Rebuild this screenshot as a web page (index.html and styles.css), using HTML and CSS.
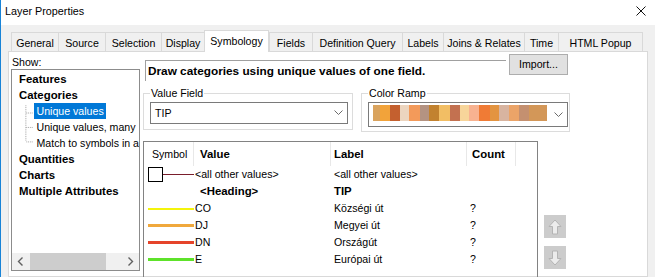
FILE: index.html
```html
<!DOCTYPE html>
<html lang="hu">
<head>
    <meta charset="UTF-8">
    <title>Layer Properties</title>
<link rel="stylesheet" href="styles.css">
</head>
<body>
<div class="window">
    <div class="titlebar">
        <span class="title">Layer Properties</span>
        <svg class="close" width="10" height="10" viewBox="0 0 10 10"><path d="M0.5 0.5L9.5 9.5M9.5 0.5L0.5 9.5" stroke="#111" stroke-width="1"/></svg>
    </div>

    <!-- Tab strip -->
    <div class="tabs">
        <div class="tab">General</div>
        <div class="tab">Source</div>
        <div class="tab">Selection</div>
        <div class="tab">Display</div>
        <div class="tab active">Symbology</div>
        <div class="tab">Fields</div>
        <div class="tab">Definition Query</div>
        <div class="tab">Labels</div>
        <div class="tab">Joins &amp; Relates</div>
        <div class="tab">Time</div>
        <div class="tab last">HTML Popup</div>
    </div>

    <div class="page">
        <div class="show-col">
            <div class="show-label">Show:</div>
            <div class="tree">
                <div class="tree-items">
                    <div class="node">Features</div>
                    <div class="node">Categories</div>
                    <div class="children">
                        <svg class="branches" width="15" height="48" viewBox="0 0 15 48">
                            <path d="M6.5 0V40M7 8.5H15M7 24.5H15M7 40.5H15" stroke="#9a9a9a" stroke-width="1" stroke-dasharray="1 1" fill="none"/>
                        </svg>
                        <div class="leaves">
                            <div class="leaf"><span class="selected">Unique values</span></div>
                            <div class="leaf">Unique values, many</div>
                            <div class="leaf">Match to symbols in a</div>
                        </div>
                    </div>
                    <div class="node">Quantities</div>
                    <div class="node">Charts</div>
                    <div class="node">Multiple Attributes</div>
                </div>
                <div class="hscroll">
                    <div class="sb-arrow"><svg width="7" height="9" viewBox="0 0 7 9"><path d="M5.5 0.5L1.5 4.5L5.5 8.5" stroke="#606060" stroke-width="1.4" fill="none"/></svg></div>
                    <div class="sb-thumb"></div>
                    <div class="sb-space"></div>
                    <div class="sb-arrow"><svg width="7" height="9" viewBox="0 0 7 9"><path d="M1.5 0.5L5.5 4.5L1.5 8.5" stroke="#606060" stroke-width="1.4" fill="none"/></svg></div>
                </div>
            </div>
        </div>

        <div class="main-col">
            <div class="desc-row">
                <div class="desc">Draw categories using unique values of one field.</div>
                <div class="btn">Import...</div>
            </div>

            <div class="fields-row">
                <fieldset class="group value-field">
                    <legend>Value Field</legend>
                    <div class="combo value-combo">
                        <span>TIP</span>
                        <svg class="chev" width="9" height="6" viewBox="0 0 9 6"><path d="M0.5 0.5L4.5 4.5L8.5 0.5" stroke="#6a6a6a" stroke-width="1" fill="none"/></svg>
                    </div>
                </fieldset>
                <fieldset class="group color-ramp">
                    <legend>Color Ramp</legend>
                    <div class="combo ramp-combo">
                        <div class="ramp"></div>
                        <svg class="chev" width="9" height="6" viewBox="0 0 9 6"><path d="M0.5 0.5L4.5 4.5L8.5 0.5" stroke="#6a6a6a" stroke-width="1" fill="none"/></svg>
                    </div>
                </fieldset>
            </div>

            <div class="table-row">
                <div class="symtable">
                    <div class="row head">
                        <div class="th c-sym">Symbol</div>
                        <div class="th c-val b">Value</div>
                        <div class="th c-lab b">Label</div>
                        <div class="th c-cnt b">Count</div>
                    </div>
                    <div class="row">
                        <div class="c-sym"><span class="swatch"></span><span class="line other"></span></div>
                        <div class="c-val">&lt;all other values&gt;</div>
                        <div class="c-lab">&lt;all other values&gt;</div>
                        <div class="c-cnt"></div>
                    </div>
                    <div class="row">
                        <div class="c-sym"></div>
                        <div class="c-val heading b">&lt;Heading&gt;</div>
                        <div class="c-lab b">TIP</div>
                        <div class="c-cnt"></div>
                    </div>
                    <div class="row">
                        <div class="c-sym"><span class="line co"></span></div>
                        <div class="c-val">CO</div>
                        <div class="c-lab">Községi út</div>
                        <div class="c-cnt">?</div>
                    </div>
                    <div class="row">
                        <div class="c-sym"><span class="line dj"></span></div>
                        <div class="c-val">DJ</div>
                        <div class="c-lab">Megyei út</div>
                        <div class="c-cnt">?</div>
                    </div>
                    <div class="row">
                        <div class="c-sym"><span class="line dn"></span></div>
                        <div class="c-val">DN</div>
                        <div class="c-lab">Országút</div>
                        <div class="c-cnt">?</div>
                    </div>
                    <div class="row">
                        <div class="c-sym"><span class="line e"></span></div>
                        <div class="c-val">E</div>
                        <div class="c-lab">Európai út</div>
                        <div class="c-cnt">?</div>
                    </div>
                </div>
                <div class="order-btns">
                    <div class="move-btn">
                        <svg width="14" height="16" viewBox="0 0 14 16"><path d="M7 1L13 7.5H9.5V15H4.5V7.5H1Z" fill="#ececec" stroke="#b4b4b4" stroke-width="1"/></svg>
                    </div>
                    <div class="move-btn">
                        <svg width="14" height="16" viewBox="0 0 14 16"><path d="M7 15L13 8.5H9.5V1H4.5V8.5H1Z" fill="#ececec" stroke="#b4b4b4" stroke-width="1"/></svg>
                    </div>
                </div>
            </div>
        </div>
    </div>
</div>
</body>
</html>
```

FILE: styles.css
```css
* {
    box-sizing: border-box;
}
body {
    margin: 0;
    background: #f0f0f0;
    font-family: "Liberation Sans", Arial, sans-serif;
    font-size: 10.6px;
    color: #000;
}
.b {
    font-weight: bold;
    font-size: 11.4px;
}
.window {
    width: 655px;
    height: 277px;
    border-left: 1px solid #1883d7;
    overflow: hidden;
}
.titlebar {
    height: 25px;
    background: #fff;
    display: flex;
    align-items: center;
    justify-content: space-between;
    padding: 0 9px 3px 4px;
}
.title {
    font-size: 10.8px;
}

/* Tabs */
.tabs {
    margin-top: 5px;
    padding-left: 10px;
    height: 21px;
    display: grid;
    grid-template-columns: 47px 47px 56px 43px 65px 43px 90px 41px 81px 34px 85px;
    align-items: end;
}
.tab {
    height: 19px;
    padding-top: 2px;
    line-height: 17px;
    text-align: center;
    border-top: 1px solid #d9d9d9;
    border-left: 1px solid #d9d9d9;
    white-space: nowrap;
}
.tab.last {
    border-right: 1px solid #d9d9d9;
}
.tab.active {
    height: 22px;
    margin-bottom: -1px;
    background: #fff;
    border-right: 1px solid #d9d9d9;
}
.page {
    margin-left: 7px;
    width: 640px;
    height: 226px;
    background: #fff;
    border: 1px solid #d9d9d9;
    padding-left: 2px;
    display: flex;
}

/* Left tree */
.show-col {
    width: 129px;
}
.show-label {
    margin-top: 3px;
    height: 14px;
    line-height: 14px;
    padding-left: 1px;
}
.tree {
    height: 202px;
    border: 1px solid #8c8c8c;
    display: flex;
    flex-direction: column;
}
.tree-items {
    flex: 1;
    padding-top: 1px;
}
.node {
    height: 16px;
    line-height: 16px;
    padding-left: 7px;
    font-weight: bold;
    font-size: 11.4px;
    white-space: nowrap;
}
.children {
    display: flex;
    margin-left: 8px;
}
.branches {
    display: block;
}
.leaf {
    height: 16px;
    line-height: 16px;
    padding-left: 3px;
    white-space: nowrap;
    overflow: hidden;
}
.selected {
    display: inline-block;
    margin-left: -3px;
    padding: 0 2px 0 3px;
    background: #0078d7;
    color: #fff;
}
.hscroll {
    height: 17px;
    background: #f0f0f0;
    display: flex;
}
.sb-arrow {
    width: 17px;
    display: flex;
    align-items: center;
    justify-content: center;
}
.sb-thumb {
    width: 76px;
    margin-left: 1px;
    background: #cdcdcd;
}
.sb-space {
    flex: 1;
}

/* Main column */
.main-col {
    margin-left: 3px;
    width: 430px;
}
.desc-row {
    height: 31px;
    display: flex;
    align-items: flex-start;
}
.desc {
    margin: 8px 0 0 2px;
    width: 361px;
    height: 21px;
    line-height: 21px;
    padding-left: 2px;
    border-top: 1px solid #a0a0a0;
    border-left: 1px solid #a0a0a0;
    font-weight: bold;
    font-size: 11.8px;
    white-space: nowrap;
}
.btn {
    margin: 2px 0 0 3px;
    width: 59px;
    height: 21px;
    line-height: 19px;
    text-align: center;
    background: #e1e1e1;
    border: 1px solid #adadad;
}
.fields-row {
    margin-top: 4px;
    height: 45px;
    display: flex;
    align-items: flex-start;
}
.group {
    margin: 0;
    min-width: 0;
    border: 1px solid #dcdcdc;
}
.group legend {
    padding: 0 1px;
    line-height: 13px;
}
.value-field {
    width: 210px;
    padding: 2px 4px 5px 6px;
}
.color-ramp {
    width: 209px;
    margin-left: 8px;
    padding: 2px 1px 4px 6px;
}
.combo {
    border: 1px solid #7a7a7a;
    display: flex;
    align-items: center;
    justify-content: space-between;
}
.value-combo {
    width: 198px;
    height: 22px;
    padding-left: 4px;
}
.ramp-combo {
    width: 200px;
    height: 25px;
    align-items: flex-start;
}
.chev {
    margin-right: 4px;
}
.ramp-combo .chev {
    margin-top: 9px;
}
.ramp {
    margin: 2px 0 0 4px;
    width: 174px;
    height: 16px;
    background: linear-gradient(to right,
        #d9a35e 0 7px, #f2a33a 7px 17px, #c4602f 17px 27px, #ecd5bf 27px 36px,
        #f39a5a 36px 47px, #b49382 47px 56px, #c2822f 56px 66px, #f2be64 66px 77px,
        #c37150 77px 87px, #f7d59a 87px 96px, #f8b290 96px 106px, #f07b35 106px 117px,
        #e39440 117px 126px, #d8b4a0 126px 136px, #eba468 136px 146px, #c49070 146px 156px,
        #d39758 156px 174px);
}

/* Symbol table */
.table-row {
    margin-top: 9px;
    display: flex;
}
.symtable {
    width: 395px;
    height: 160px;
    border: 1px solid #828282;
}
.row {
    display: grid;
    grid-template-columns: 50px 137px 136px 49px;
    height: 17px;
    line-height: 17px;
    white-space: nowrap;
}
.row.head {
    height: 24px;
    line-height: 24px;
}
.th {
    border-right: 1px solid #e8e8e8;
}
.c-sym {
    display: flex;
    align-items: center;
}
.th.c-sym {
    display: block;
    padding-left: 8px;
}
.c-val {
    padding-left: 1px;
}
.th.c-val, .c-val.heading {
    padding-left: 6px;
}
.c-lab {
    padding-left: 3px;
}
.c-cnt {
    padding-left: 3px;
}
.th.c-cnt {
    padding-left: 5px;
}
.swatch {
    width: 15px;
    height: 15px;
    margin-left: 4px;
    border: 1px solid #000;
}
.line {
    flex: 1;
    height: 3px;
    margin-left: 4px;
}
.line.other {
    height: 1px;
    margin-left: 0;
    background: #7a1e2c;
}
.line.co {
    height: 2px;
    background: #f4f40c;
}
.line.dj {
    background: #f0a83c;
}
.line.dn {
    background: #e5442a;
}
.line.e {
    background: #5ee22a;
}
.order-btns {
    margin: 74px 0 0 6px;
    display: flex;
    flex-direction: column;
    gap: 8px;
}
.move-btn {
    width: 22px;
    height: 23px;
    background: #cccccc;
    display: flex;
    align-items: center;
    justify-content: center;
}
```
